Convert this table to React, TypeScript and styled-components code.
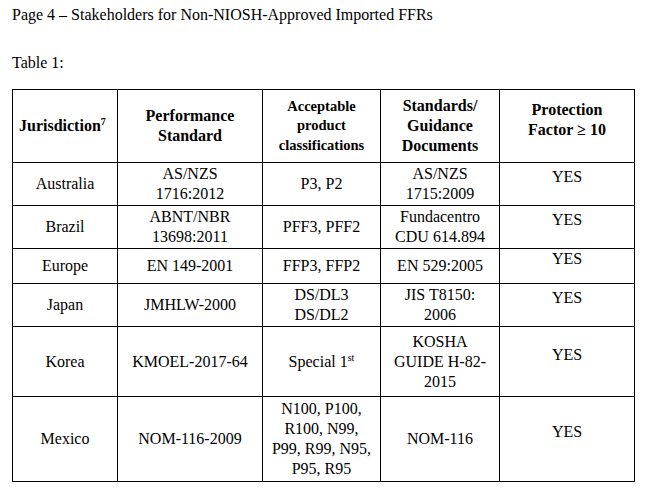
import React from "react";
import styled, { createGlobalStyle } from "styled-components";

const Global = createGlobalStyle`
  html, body { margin: 0; padding: 0; background: #fff; }
  body { font-family: "Liberation Serif", "Times New Roman", serif; color: #000; }
`;

const Page = styled.div`
  padding: 5px 0 0 12px;
  font-size: 16px;
  line-height: 20px;
`;

const Title = styled.p`
  margin: 0;
`;

const Caption = styled.p`
  margin: 28px 0 0;
`;

const Table = styled.table`
  margin-top: 16px;
  border-collapse: collapse;
  table-layout: fixed;
  width: 623px;
`;

const HeadCell = styled.th<{ $small?: boolean; $left?: boolean; $last?: boolean }>`
  border: 1px solid #000;
  font-weight: bold;
  font-size: ${(p) => (p.$small ? "14.5px" : "16px")};
  line-height: ${(p) => (p.$small ? "19.5px" : "20px")};
  text-align: ${(p) => (p.$left ? "left" : "center")};
  padding: ${(p) => (p.$left ? "0 4px 0 6px" : p.$last ? "0 4px 13px" : "0 4px")};
  vertical-align: middle;
`;

const Cell = styled.td<{ $last?: boolean }>`
  border: 1px solid #000;
  text-align: center;
  vertical-align: middle;
  padding: ${(p) => (p.$last ? "0 4px 14px" : "0 4px")};
  font-size: 16px;
  line-height: 20px;
`;

const Row = styled.tr<{ $h: number }>`
  height: ${(p) => p.$h}px;
`;

const Sup = styled.sup`
  font-size: 10px;
  line-height: 0;
  vertical-align: 6px;
`;

type RowData = {
  h: number;
  j: string;
  perf: React.ReactNode;
  cls: React.ReactNode;
  doc: React.ReactNode;
};

const lines = (...xs: string[]) =>
  xs.map((x, i) => (
    <React.Fragment key={i}>
      {i > 0 && <br />}
      {x}
    </React.Fragment>
  ));

const rows: RowData[] = [
  { h: 43, j: "Australia", perf: lines("AS/NZS", "1716:2012"), cls: "P3, P2", doc: lines("AS/NZS", "1715:2009") },
  { h: 43, j: "Brazil", perf: lines("ABNT/NBR", "13698:2011"), cls: "PFF3, PFF2", doc: lines("Fundacentro", "CDU 614.894") },
  { h: 35, j: "Europe", perf: "EN 149-2001", cls: "FFP3, FFP2", doc: "EN 529:2005" },
  { h: 43, j: "Japan", perf: "JMHLW-2000", cls: lines("DS/DL3", "DS/DL2"), doc: lines("JIS T8150:", "2006") },
  {
    h: 70,
    j: "Korea",
    perf: "KMOEL-2017-64",
    cls: (
      <>
        Special 1<Sup>st</Sup>
      </>
    ),
    doc: lines("KOSHA", "GUIDE H-82-", "2015"),
  },
  {
    h: 85,
    j: "Mexico",
    perf: "NOM-116-2009",
    cls: lines("N100, P100,", "R100, N99,", "P99, R99, N95,", "P95, R95"),
    doc: "NOM-116",
  },
];

export default function App() {
  return (
    <Page>
      <Global />
      <Title>Page 4 – Stakeholders for Non-NIOSH-Approved Imported FFRs</Title>
      <Caption>Table 1:</Caption>
      <Table>
        <colgroup>
          <col style={{ width: 105 }} />
          <col style={{ width: 145 }} />
          <col style={{ width: 118 }} />
          <col style={{ width: 119 }} />
          <col style={{ width: 135 }} />
        </colgroup>
        <thead>
          <Row $h={73}>
            <HeadCell $left>
              Jurisdiction<Sup>7</Sup>
            </HeadCell>
            <HeadCell>{lines("Performance", "Standard")}</HeadCell>
            <HeadCell $small>{lines("Acceptable", "product", "classifications")}</HeadCell>
            <HeadCell>{lines("Standards/", "Guidance", "Documents")}</HeadCell>
            <HeadCell $last>
              Protection
              <br />
              Factor ≥ 10
            </HeadCell>
          </Row>
        </thead>
        <tbody>
          {rows.map((r) => (
            <Row key={r.j} $h={r.h}>
              <Cell>{r.j}</Cell>
              <Cell>{r.perf}</Cell>
              <Cell>{r.cls}</Cell>
              <Cell>{r.doc}</Cell>
              <Cell $last>YES</Cell>
            </Row>
          ))}
        </tbody>
      </Table>
    </Page>
  );
}
